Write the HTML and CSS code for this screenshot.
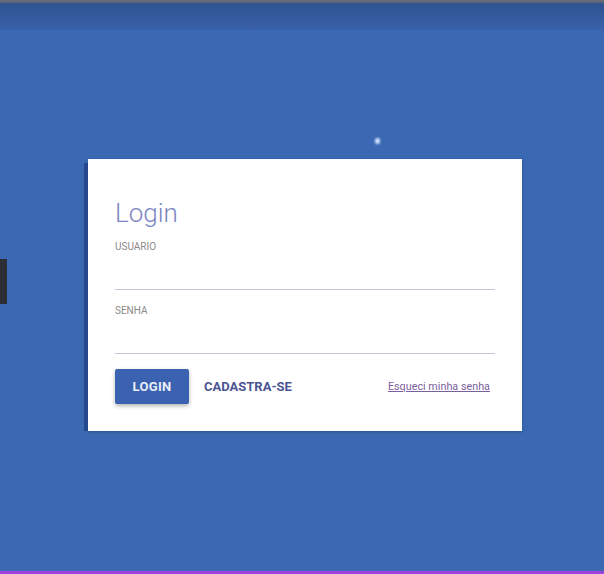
FILE: index.html
```html
<!DOCTYPE html>
<html lang="pt">
<head>
<meta charset="utf-8">
<title>Login</title>
<link rel="stylesheet" href="styles.css">
</head>
<body>
<div class="topbar"></div>
<div class="side-tab"></div>
<div class="cursor"></div>
<main class="stage">
  <section class="card">
    <h1 class="title">Login</h1>
    <label class="field">
      <span class="label">USUARIO</span>
      <span class="input"></span>
    </label>
    <label class="field">
      <span class="label">SENHA</span>
      <span class="input"></span>
    </label>
    <div class="actions">
      <button class="btn-login">LOGIN</button>
      <button class="btn-flat">CADASTRA-SE</button>
      <a class="forgot" href="#">Esqueci minha senha</a>
    </div>
  </section>
</main>
<div class="bottombar"></div>
</body>
</html>
```
FILE: styles.css
```css
html, body {
  margin: 0;
  padding: 0;
  height: 100%;
}
body {
  background: #3a68b2;
  font-family: Roboto, "Liberation Sans", sans-serif;
  overflow: hidden;
  position: relative;
}
.topbar {
  position: absolute;
  left: 0; top: 0; right: 0;
  height: 30px;
  background: linear-gradient(#6a6f7c 0px, #5e6678 2px, #2f5290 4px, #3a62ab 30px);
}
.bottombar {
  position: absolute;
  left: 0; right: 0; bottom: 0;
  height: 3px;
  background: #9b44dd;
}
.side-tab {
  position: absolute;
  left: 0; top: 259px;
  width: 7px; height: 45px;
  background: #2c2e33;
}
.cursor {
  position: absolute;
  left: 375px; top: 138px;
  width: 5px; height: 6px;
  background: #cfe0ff;
  border-radius: 2px;
  filter: blur(1px);
}
.stage {
  padding-top: 159px;
  padding-left: 88px;
}
.card {
  width: 434px;
  height: 272px;
  box-sizing: border-box;
  background: #fff;
  padding: 38px 27px 0 27px;
  box-shadow: -6px 2px 0 -2px #25498c, 0 1px 3px rgba(0,0,0,0.2);
}
.title {
  margin: 0;
  font-weight: 300;
  font-size: 26px;
  line-height: 32px;
  color: #7d86c2;
}
.field {
  display: flex;
  flex-direction: column;
}
.label {
  font-size: 10px;
  color: #8a8a8a;
  line-height: 12px;
  margin-top: 12px;
}
.field + .field .label {
  margin-top: 15px;
}
.input {
  height: 36px;
  border-bottom: 1px solid #c3c6d6;
}
.actions {
  display: flex;
  align-items: center;
  margin-top: 15px;
}
.btn-login {
  width: 74px;
  height: 35px;
  background: #3a62b0;
  color: #e9eef8;
  border: none;
  border-radius: 2px;
  font-family: inherit;
  font-weight: 700;
  font-size: 13px;
  letter-spacing: 0.3px;
  box-shadow: 0 2px 4px rgba(0,0,0,0.3);
}
.btn-flat {
  background: none;
  border: none;
  padding: 0;
  margin-left: 15px;
  font-family: inherit;
  font-weight: 700;
  font-size: 13px;
  color: #4a5593;
}
.forgot {
  margin-left: auto;
  margin-right: 5px;
  font-size: 10.8px;
  color: #7a5f9e;
  text-decoration: underline;
}
```
